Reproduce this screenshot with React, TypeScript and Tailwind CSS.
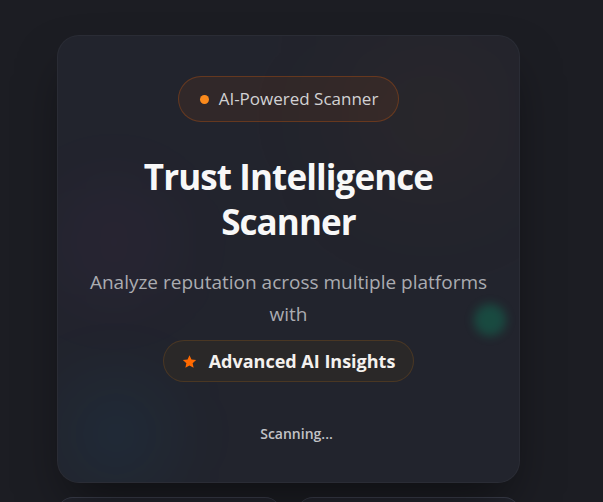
import React from "react";

const font = { fontFamily: '"Open Sans", "Noto Sans", sans-serif' };

function StarIcon() {
  return (
    <svg viewBox="0 0 24 24" className="h-[15px] w-[15px] fill-orange-500" aria-hidden>
      <path d="M12 1.8l3.1 6.9 7.5.8-5.6 5.1 1.6 7.4L12 18.2 5.4 22l1.6-7.4L1.4 9.5l7.5-.8z" />
    </svg>
  );
}

export default function App() {
  return (
    <div className="min-h-[502px] bg-[#1c1d23] overflow-hidden" style={font}>
      <div className="pt-[35px] pl-[57px] w-[520px]">
        <div className="relative overflow-hidden rounded-[22px] bg-[#22242d] border border-white/[0.04] shadow-2xl shadow-black/50 h-[448px] px-8 pt-10">
          <div className="absolute top-0 right-[10px] h-40 w-40 rounded-full bg-orange-500/[0.045] blur-3xl" />
          <div className="absolute top-[150px] left-0 h-28 w-28 rounded-full bg-fuchsia-500/[0.04] blur-2xl" />
          <div className="absolute top-[350px] left-[10px] h-24 w-24 rounded-full bg-sky-500/[0.08] blur-2xl" />
          <div className="absolute top-[268px] left-[416px] h-8 w-8 rounded-full bg-emerald-500/25 blur-[5px]" />

          <div className="relative flex flex-col items-center text-center">
            <div className="flex h-[46px] items-center gap-[10px] rounded-full border border-orange-500/25 bg-orange-500/[0.07] pl-[21px] pr-[20px]">
              <span className="h-[9px] w-[9px] rounded-full bg-[#fb8a1c]" />
              <span className="text-[17px] text-[#d2d2d4]">AI-Powered Scanner</span>
            </div>

            <h1 className="mt-[32px] text-[35px] font-bold leading-[45px] tracking-[-0.9px] text-[#f8f8f8]">
              Trust Intelligence
              <br />
              Scanner
            </h1>

            <p className="mt-[22px] whitespace-nowrap text-[19px] leading-[32px] text-[#abacb1]">
              Analyze reputation across multiple platforms
              <br />
              with
            </p>

            <div className="mt-[10px] flex h-[42px] items-center gap-[12px] rounded-full border border-orange-400/15 bg-[#2a2828] px-[18px]">
              <StarIcon />
              <span className="text-[18px] font-bold text-[#f4f1ee]">Advanced AI Insights</span>
            </div>

            <div className="mt-[41px] pl-[16px] text-[14px] font-semibold text-[#c2c3c7]">Scanning...</div>
          </div>
        </div>

        <div className="mt-[14px] grid grid-cols-2 gap-4">
          <div className="h-32 rounded-2xl border-t border-[#3a3d4a] bg-[#22242d]" />
          <div className="h-32 rounded-2xl border-t border-[#3a3d4a] bg-[#22242d]" />
        </div>
      </div>
    </div>
  );
}
